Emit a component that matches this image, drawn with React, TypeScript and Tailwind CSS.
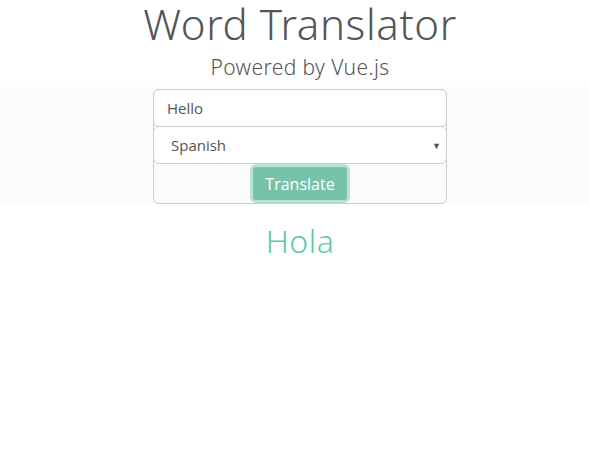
export default function App() {
  return (
    <div className="min-h-[452px] bg-white text-[#555]">
      <h1 className="pl-[11px] text-center font-['Noto_Sans',sans-serif] text-[42px] font-light leading-[48px] tracking-[0.6px]">
        Word Translator
      </h1>
      <p className="mt-[5px] pl-[11px] text-center font-['Noto_Sans',sans-serif] text-[21px] font-light leading-[28px] tracking-[0.4px]">
        Powered by Vue.js
      </p>
      <div className="mt-[6px] bg-[#fcfcfc] pl-[11px] pt-[2px]">
        <form
          className="mx-auto flex w-[294px] flex-col rounded-[6px] border border-[#cccccc] font-['Open_Sans',sans-serif]"
          onSubmit={(e) => e.preventDefault()}
        >
          <input
            defaultValue="Hello"
            className="-m-px h-[38px] rounded-[6px] border border-[#cccccc] bg-white px-[13px] text-[15px] text-[#555] outline-none"
          />
          <div className="relative -mx-px">
            <select
              defaultValue="es"
              className="h-[38px] w-full appearance-none rounded-[6px] border border-[#cccccc] bg-white px-[17px] text-[15px] text-[#555] outline-none"
            >
              <option value="es">Spanish</option>
              <option value="fr">French</option>
            </select>
            <span className="pointer-events-none absolute right-[6px] top-[13px] text-[9px] text-[#555]">▼</span>
          </div>
          <div className="flex justify-center">
            <button
              type="submit"
              className="h-[39px] w-[100px] rounded-[6px] border-[3px] border-[#b7e3d4] bg-[#78c2ab] text-[16px] text-white"
            >
              Translate
            </button>
          </div>
        </form>
      </div>
      <div className="mt-[18px] pl-[11px] text-center font-['Noto_Sans',sans-serif] text-[32px] font-light leading-[38px] tracking-[0.5px] text-[#5fc9a2]">
        Hola
      </div>
    </div>
  );
}
